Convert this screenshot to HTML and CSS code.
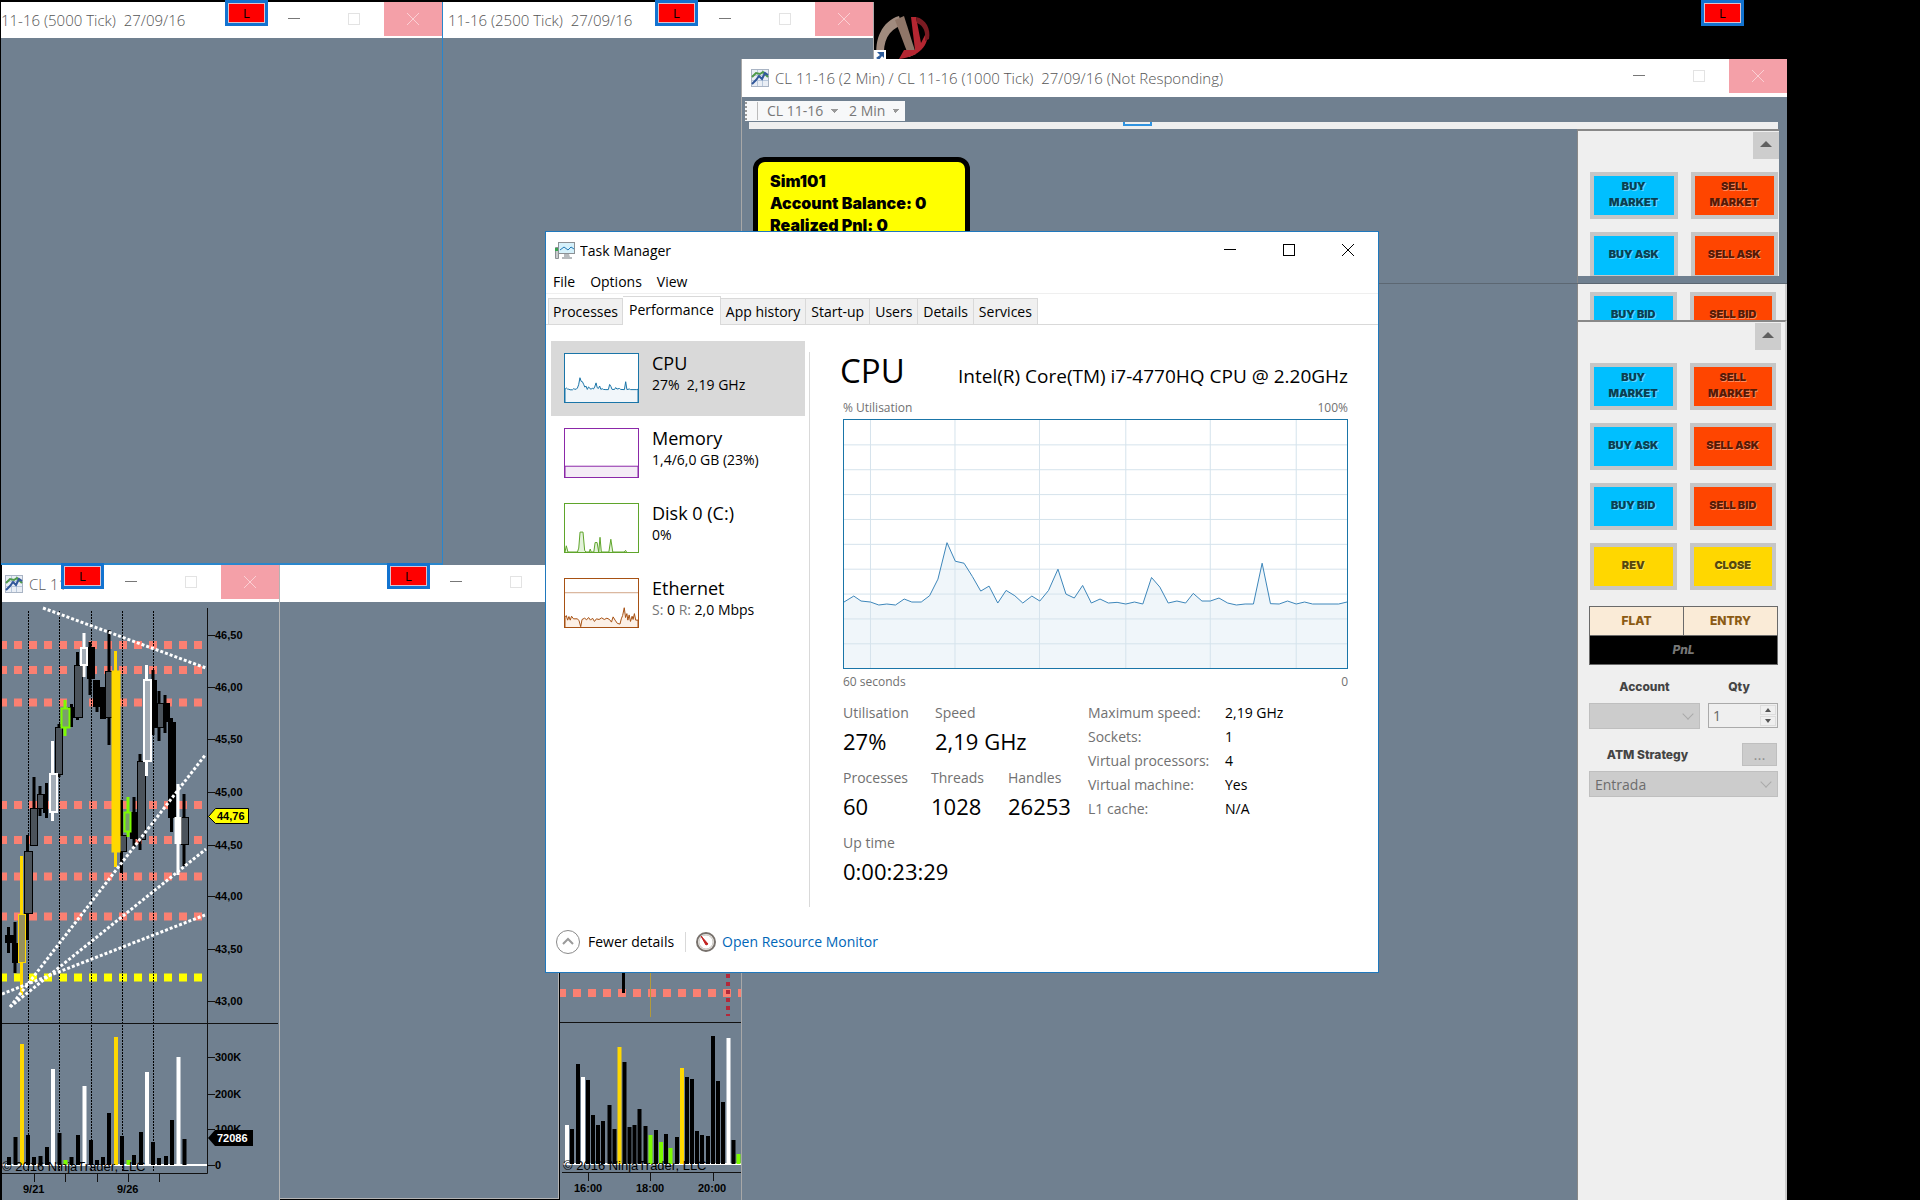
FILE: index.html
```html
<!DOCTYPE html>
<html lang="en">
<head>
    <meta charset="UTF-8">
    <meta name="viewport" content="width=device-width, initial-scale=1.0">
    <title>Task Manager</title>
    <link rel="stylesheet" href="styles.css">
</head>
<body>

    <!-- Shared icons -->
    <svg class="defs" aria-hidden="true">
        <symbol id="icon-min" viewBox="0 0 14 14"><path d="M1 6.5h12" fill="none" stroke="currentColor"/></symbol>
        <symbol id="icon-max" viewBox="0 0 14 14"><rect x="1.5" y="1.5" width="11" height="11" fill="none" stroke="currentColor"/></symbol>
        <symbol id="icon-close" viewBox="0 0 14 14"><path d="M1 1l12 12M13 1L1 13" fill="none" stroke="currentColor"/></symbol>
        <symbol id="icon-chart" viewBox="0 0 18 18">
            <rect x=".5" y=".5" width="17" height="17" fill="#e9eef5" stroke="#a9b4c4"/>
            <path d="M6.5 1v16M11.5 1v16M1 6.5h16M1 11.5h16" stroke="#b8c8dc"/>
            <path d="M1 8l4-4 4 1 3-2 5 5" fill="none" stroke="#4f9a4a" stroke-width="2"/>
            <path d="M1 15l4-4 3-4 3 3 3-6 3 2" fill="none" stroke="#31589b" stroke-width="2"/>
        </symbol>
    </svg>

    <main class="desktop">

        <!-- Desktop shortcut -->
        <svg class="shortcut" viewBox="0 0 58 46" aria-label="NinjaTrader">
            <path d="M4 44C1 26 9 7 26 2l3 9C15 16 10 27 11 44z" fill="#a08b7e"/>
            <path d="M22 6l9-4 12 38-7 3z" fill="#8f7668"/>
            <path d="M38 3h5l5 26 6-12c3 14-8 26-28 28l5-9 11 0z" fill="#b52631"/>
            <path d="M43 3c10 2 15 12 13 22l-4 2c1-9-1-15-8-18z" fill="#7b1b22"/>
            <path d="M0 36h13v10H0z" fill="#fff"/>
            <path d="M4 38h7v6l-2-2-3 4-3-2 4-3z" fill="#2b5b9b"/>
        </svg>

        <!-- Tick chart windows -->
        <section class="window win-5000">
            <header class="titlebar">
                <h2 class="title">11-16 (5000 Tick)&nbsp; 27/09/16</h2>
                <button class="win-btn min" aria-label="Minimise"><svg><use href="#icon-min"/></svg></button>
                <button class="win-btn" aria-label="Maximise"><svg><use href="#icon-max"/></svg></button>
                <button class="win-btn close" aria-label="Close"><svg><use href="#icon-close"/></svg></button>
            </header>
        </section>
        <section class="window win-2500">
            <header class="titlebar">
                <h2 class="title">11-16 (2500 Tick)&nbsp; 27/09/16</h2>
                <button class="win-btn min" aria-label="Minimise"><svg><use href="#icon-min"/></svg></button>
                <button class="win-btn" aria-label="Maximise"><svg><use href="#icon-max"/></svg></button>
                <button class="win-btn close" aria-label="Close"><svg><use href="#icon-close"/></svg></button>
            </header>
        </section>

        <!-- Daily chart window -->
        <section class="window win-daily">
            <header class="titlebar">
                <svg class="app-icon"><use href="#icon-chart"/></svg>
                <h2 class="title">CL 11</h2>
                <button class="win-btn min" aria-label="Minimise"><svg><use href="#icon-min"/></svg></button>
                <button class="win-btn" aria-label="Maximise"><svg><use href="#icon-max"/></svg></button>
                <button class="win-btn close" aria-label="Close"><svg><use href="#icon-close"/></svg></button>
            </header>
            <svg class="chart" viewBox="2 602 277 598" preserveAspectRatio="xMinYMin slice">
                <!-- support / resistance -->
                <path class="level" d="M-1 645H204M-1 670H204M-1 702.5H204M-1 805H204M-1 840H204M-1 876.5H204M-1 916.5H204"/>
                <path class="level yellow" d="M-1 977.5H204"/>
                <path class="session" d="M28.5 611V1171M59.5 611V1171M91.5 611V1171M122.5 611V1171M153.5 611V1171"/>
                <!-- candles -->
                <g class="candle solid">
                    <path d="M8.5 927V953M15 922V973M46.5 783V818M71.5 704V727M90 642V695M97 680V712M109 630V745M134 797V847M153 670V735M165 695V733M171.5 718V832"/>
                    <path d="M27.5 835V940M34 777V845M40 786V816M59 724V777M77.5 652V720M121.5 800V873M140 754V850M159 691V741M184 794V866"/>
                    <rect x="5" y="935" width="9" height="8"/><rect x="12" y="943" width="6" height="20"/>
                    <rect x="43" y="794" width="5" height="19"/><rect x="68" y="707" width="8" height="11"/>
                    <rect x="87" y="647" width="8" height="32"/><rect x="93" y="680" width="7" height="27"/>
                    <rect x="100" y="687" width="6" height="32"/><rect x="130" y="812" width="9" height="27"/>
                    <rect x="149" y="680" width="8" height="48"/><rect x="162" y="703" width="8" height="19"/>
                    <rect x="168" y="722" width="8" height="96"/>
                </g>
                <g class="candle hollow">
                    <rect x="24.5" y="851.5" width="8" height="62"/><rect x="30.5" y="808.5" width="7" height="37"/>
                    <rect x="37.5" y="794.5" width="6" height="14"/><rect x="55.5" y="727.5" width="7" height="47"/>
                    <rect x="74.5" y="665.5" width="8" height="52"/><rect x="105.5" y="671.5" width="7" height="46"/>
                    <rect x="118.5" y="835.5" width="8" height="16"/><rect x="137.5" y="761.5" width="8" height="78"/>
                    <rect x="157.5" y="703.5" width="6" height="24"/><rect x="181.5" y="817.5" width="7" height="27"/>
                </g>
                <g class="candle white">
                    <path d="M52.5 741V774M52.5 812V821M84 633V648M84 665V677M146.5 665V680M146.5 761V776M178 784V875"/>
                    <rect x="50" y="774" width="7" height="38"/><rect x="81" y="648" width="6" height="17"/>
                    <rect x="144" y="680" width="7" height="81"/><rect x="175.5" y="818" width="5" height="25" fill="#fff"/>
                </g>
                <g class="candle green">
                    <path d="M65 700V708M65 728V736M128 797V812M128 832V837"/>
                    <rect x="61.5" y="708.5" width="8" height="19"/><rect x="124.5" y="812.5" width="6" height="19"/>
                </g>
                <g class="candle gold">
                    <path d="M21.5 856V995M115.5 651V867"/>
                    <rect x="18.5" y="914.5" width="7" height="48" fill="#96905c"/><rect x="112" y="671" width="8" height="181" fill="#ffd800"/>
                </g>
                <!-- trend lines -->
                <path class="trend" d="M43 608L206 668M10 1007L206 754M10 1007L206 849M2 994L205 915"/>
                <!-- volume -->
                <path class="axis" d="M2 1023.5H278"/>
                <path class="baseline" d="M2 1165H207"/>
                <path class="bars" d="M9 1165V1157M15.5 1165V1137M28 1165V1135M34 1165V1157M40.5 1165V1156M47 1165V1147M59.5 1165V1133M71.5 1165V1157M78 1165V1135M91 1165V1140M97 1165V1160M103 1165V1157M109 1165V1113M122 1165V1136M134 1165V1155M141 1165V1132M153 1165V1142M159 1165V1158M166 1165V1156M172 1165V1120M184.5 1165V1139"/>
                <path class="bars gold" d="M22 1165V1044M116 1165V1037"/>
                <path class="bars white" d="M53 1165V1069M84.5 1165V1086M147 1165V1072M178.5 1165V1057"/>
                <path class="bars green" d="M65.5 1165V1160M128.5 1165V1160"/>
                <text class="watermark" x="2" y="1171">© 2016 NinjaTrader, LLC</text>
                <!-- axes -->
                <path class="axis" d="M207.5 608V1173.5H2M207 635.5h8M207 687.5h8M207 739.5h8M207 792.5h8M207 845.5h8M207 896.5h8M207 949.5h8M207 1001.5h8M207 1057.5h8M207 1094.5h8M207 1129.5h8M207 1165.5h8M34.5 1174v8M65.5 1174v8M97.5 1174v8M128.5 1174v8M159.5 1174v8"/>
                <g class="tick-label">
                    <text x="215" y="639">46,50</text><text x="215" y="691">46,00</text>
                    <text x="215" y="743">45,50</text><text x="215" y="796">45,00</text>
                    <text x="215" y="849">44,50</text><text x="215" y="900">44,00</text>
                    <text x="215" y="953">43,50</text><text x="215" y="1005">43,00</text>
                    <text x="215" y="1061">300K</text><text x="215" y="1098">200K</text>
                    <text x="215" y="1133">100K</text><text x="215" y="1169">0</text>
                    <text x="23" y="1193">9/21</text><text x="117" y="1193">9/26</text>
                </g>
                <path d="M208.5 816.5l7-8h33v15h-33z" fill="#ff0" stroke="#000"/>
                <path d="M208 1138l7-8h38v16h-38z"/>
                <g class="tick-label">
                    <text x="217" y="820">44,76</text><text x="217" y="1142" fill="#fff">72086</text>
                </g>
            </svg>
        </section>

        <!-- Empty chart window -->
        <section class="window win-empty">
            <header class="titlebar">
                <h2 class="title"></h2>
                <button class="win-btn min" aria-label="Minimise"><svg><use href="#icon-min"/></svg></button>
                <button class="win-btn" aria-label="Maximise"><svg><use href="#icon-max"/></svg></button>
            </header>
        </section>

        <!-- Intraday chart window -->
        <section class="window win-intraday">
            <svg class="chart" viewBox="560 970 181 230" preserveAspectRatio="xMinYMin slice">
                <path class="level" d="M558 993H741"/>
                <path d="M623.5 970V993" stroke="#000" stroke-width="3"/>
                <path d="M650.5 970V1017" stroke="#b39a3a"/>
                <path d="M728 974V1016" stroke="#b3283a" stroke-width="4" stroke-dasharray="4 4"/>
                <path class="axis" d="M560 1022.5H741"/>
                <path class="baseline" d="M563 1164H741"/>
                <path class="bars" d="M572 1164V1129M578 1164V1064M588 1164V1080M593 1164V1115M598 1164V1125M603 1164V1121M609.5 1164V1105M614.5 1164V1129M624.5 1164V1062M629.5 1164V1127M634.5 1164V1125M639.5 1164V1109M645.5 1164V1126M656 1164V1130M666 1164V1134M677 1164V1137M687 1164V1077M692 1164V1079M697 1164V1131M702 1164V1135M708 1164V1136M713 1164V1036M718 1164V1081M723 1164V1102M733.5 1164V1140"/>
                <path class="bars gold" d="M619.5 1164V1047M682 1164V1068"/>
                <path class="bars white" d="M567 1164V1125M583 1164V1077M728.5 1164V1038"/>
                <path class="bars green" d="M650.5 1164V1135M661 1164V1142M670.5 1164V1148M738.5 1164V1154"/>
                <text class="watermark" x="563" y="1170">© 2016 NinjaTrader, LLC</text>
                <path class="axis" d="M562 1172.5H741M588.5 1173v8M650.5 1173v8M713.5 1173v8"/>
                <g class="tick-label">
                    <text x="574" y="1192">16:00</text><text x="636" y="1192">18:00</text><text x="698" y="1192">20:00</text>
                </g>
            </svg>
        </section>

        <!-- Main trading window -->
        <section class="window win-main">
            <header class="titlebar">
                <svg class="app-icon"><use href="#icon-chart"/></svg>
                <h2 class="title">CL 11-16 (2 Min) / CL 11-16 (1000 Tick)&nbsp; 27/09/16 (Not Responding)</h2>
                <button class="win-btn min" aria-label="Minimise"><svg><use href="#icon-min"/></svg></button>
                <button class="win-btn" aria-label="Maximise"><svg><use href="#icon-max"/></svg></button>
                <button class="win-btn close" aria-label="Close"><svg><use href="#icon-close"/></svg></button>
            </header>
            <div class="toolbar">
                <span class="grip"></span>
                <select class="tool-select" aria-label="Instrument"><option>CL 11-16</option></select>
                <select class="tool-select" aria-label="Interval"><option>2 Min</option></select>
            </div>
            <div class="strip"><span class="strip-mark"></span></div>
            <div class="pane pane-top">
                <div class="pane-chart">
                    <div class="account-box">
                        <p>Sim101</p>
                        <p>Account Balance: 0</p>
                        <p>Realized Pnl: 0</p>
                    </div>
                </div>
                <div class="trader">
                    <button class="scroll-up" aria-label="Scroll up"></button>
                    <div class="orders">
                        <button class="order buy">BUY MARKET</button>
                        <button class="order sell">SELL MARKET</button>
                        <button class="order buy">BUY ASK</button>
                        <button class="order sell">SELL ASK</button>
                    </div>
                </div>
            </div>
            <div class="pane pane-mid">
                <div class="pane-chart"></div>
                <div class="trader">
                    <div class="orders">
                        <button class="order buy">BUY BID</button>
                        <button class="order sell">SELL BID</button>
                    </div>
                </div>
            </div>
            <div class="pane pane-bottom">
                <div class="pane-chart"></div>
                <div class="trader">
                    <button class="scroll-up" aria-label="Scroll up"></button>
                    <div class="orders">
                        <button class="order buy">BUY MARKET</button>
                        <button class="order sell">SELL MARKET</button>
                        <button class="order buy">BUY ASK</button>
                        <button class="order sell">SELL ASK</button>
                        <button class="order buy">BUY BID</button>
                        <button class="order sell">SELL BID</button>
                        <button class="order flat">REV</button>
                        <button class="order flat">CLOSE</button>
                    </div>
                    <div class="position">
                        <span>FLAT</span>
                        <span>ENTRY</span>
                        <span class="pnl">PnL</span>
                    </div>
                    <div class="fields">
                        <div class="field">
                            <label for="account">Account</label>
                            <span class="drop"><select id="account" disabled><option></option></select></span>
                        </div>
                        <div class="field qty">
                            <label for="qty">Qty</label>
                            <span class="spinner">
                                <input type="text" id="qty" value="1">
                                <span class="steps">
                                    <button class="up" aria-label="More"></button>
                                    <button class="down" aria-label="Less"></button>
                                </span>
                            </span>
                        </div>
                    </div>
                    <div class="strategy">
                        <div class="strategy-head">
                            <label for="strategy">ATM Strategy</label>
                            <button class="more">...</button>
                        </div>
                        <span class="drop"><select id="strategy" disabled><option>Entrada</option></select></span>
                    </div>
                </div>
            </div>
        </section>

        <!-- Link buttons -->
        <button class="link-btn link-a">L</button>
        <button class="link-btn link-b">L</button>
        <button class="link-btn link-c">L</button>
        <button class="link-btn link-d">L</button>
        <button class="link-btn link-e">L</button>

        <!-- Task Manager -->
        <section class="task-manager">
            <header class="titlebar">
                <svg class="app-icon" viewBox="0 0 20 18">
                    <path d="M.5 5.5h3v11h-3z" fill="#c9ccce" stroke="#8c9195"/>
                    <path d="M0 6h3v3H0z" fill="#3aa352"/>
                    <rect x="3.5" y=".5" width="16" height="11" fill="#d5f1fb" stroke="#8c9195"/>
                    <path d="M5 8l4-3 4 3 3-3 3 2" fill="none" stroke="#2278b5"/>
                    <path d="M9 12h5l1 3h2v2H7v-2h2z" fill="#b6babd"/>
                </svg>
                <h1 class="title">Task Manager</h1>
                <button class="win-btn" aria-label="Minimise"><svg><use href="#icon-min"/></svg></button>
                <button class="win-btn" aria-label="Maximise"><svg><use href="#icon-max"/></svg></button>
                <button class="win-btn" aria-label="Close"><svg><use href="#icon-close"/></svg></button>
            </header>
            <nav class="menu">
                <button>File</button>
                <button>Options</button>
                <button>View</button>
            </nav>
            <div class="tabs">
                <button class="tab">Processes</button>
                <button class="tab active">Performance</button>
                <button class="tab">App history</button>
                <button class="tab">Start-up</button>
                <button class="tab">Users</button>
                <button class="tab">Details</button>
                <button class="tab">Services</button>
            </div>
            <div class="tm-body">
                <div class="sidebar">
                    <button class="item selected">
                        <svg class="thumb cpu" viewBox="64 208 1387 748" preserveAspectRatio="none">
                            <path class="line" d="M64 956V757L91 739L111 754L137 757L160 766L206 766L230 748L251 757L277 757L300 738L323 688L348 578L371 634L395 640L418 680L441 724L464 709L488 760L511 722L535 738L557 760L582 739L604 754L628 722L654 658L676 733L699 745L722 707L746 760L770 748L793 760L841 763L888 763L912 683L935 712L958 760L1006 760L1027 731L1051 754L1098 745L1122 760L1193 763L1217 640L1240 762L1287 754L1311 763L1428 763L1451 757V956"/>
                        </svg>
                        <span class="item-text"><span class="name">CPU</span><span class="value">27%&nbsp; 2,19 GHz</span></span>
                    </button>
                    <button class="item">
                        <svg class="thumb memory" viewBox="0 0 223 147" preserveAspectRatio="none">
                            <path class="line" d="M0 147V114H223V147"/>
                        </svg>
                        <span class="item-text"><span class="name">Memory</span><span class="value">1,4/6,0 GB (23%)</span></span>
                    </button>
                    <button class="item">
                        <svg class="thumb disk" viewBox="0 0 223 147" preserveAspectRatio="none">
                            <path class="line" d="M0 147L4 128L9 147H38L42 135L46 86H55L60 142L64 147H74L77 138L80 147H88L92 118L98 118L103 147L107 102L111 147H134L140 108L146 147H181L185 142L188 147"/>
                        </svg>
                        <span class="item-text"><span class="name">Disk 0 (C:)</span><span class="value">0%</span></span>
                    </button>
                    <button class="item">
                        <svg class="thumb ethernet" viewBox="0 0 223 147" preserveAspectRatio="none">
                            <path class="guide" d="M0 42H223"/>
                            <path class="line" d="M0 147V118L4 112L8 126L12 115L16 126L20 114L26 122L38 122L43 128L48 146L52 124L60 120L66 125L72 118L78 126L84 120L90 130L96 122L104 124L112 119L120 124L128 120L136 124L142 132L147 116L153 126L160 136L168 138L172 122L176 112L181 88L185 118L189 106L192 126L196 110L200 130L205 114L208 124L212 106L216 126H223V147"/>
                        </svg>
                        <span class="item-text"><span class="name">Ethernet</span><span class="value"><i>S:</i> 0 <i>R:</i> 2,0 Mbps</span></span>
                    </button>
                </div>
                <div class="details">
                    <div class="heading">
                        <h2>CPU</h2>
                        <span>Intel(R) Core(TM) i7-4770HQ CPU @ 2.20GHz</span>
                    </div>
                    <div class="caption"><span>% Utilisation</span><span>100%</span></div>
                    <svg class="graph" viewBox="64 208 1387 748" preserveAspectRatio="none">
                        <path class="area" d="M64 956V757L91 739L111 754L137 757L160 766L182 763L206 766L230 748L251 757L277 757L300 738L323 688L348 578L371 634L395 640L418 680L441 724L464 709L488 760L511 722L535 738L557 760L582 739L604 754L628 722L654 658L676 733L699 745L722 707L746 760L770 748L793 760L817 758L841 763L865 757L888 763L912 683L935 712L958 760L982 754L1006 760L1027 731L1051 754L1074 754L1098 745L1122 760L1146 766L1170 763L1193 763L1217 640L1240 762L1264 763L1287 754L1311 763L1334 757L1356 763L1428 763L1451 757V956"/>
                        <path class="grid" d="M64 283H1451M64 358H1451M64 433H1451M64 508H1451M64 583H1451M64 658H1451M64 733H1451M64 808H1451M64 883H1451M137 208V956M370 208V956M603 208V956M841 208V956M1074 208V956M1311 208V956"/>
                        <path class="line" d="M64 757L91 739L111 754L137 757L160 766L182 763L206 766L230 748L251 757L277 757L300 738L323 688L348 578L371 634L395 640L418 680L441 724L464 709L488 760L511 722L535 738L557 760L582 739L604 754L628 722L654 658L676 733L699 745L722 707L746 760L770 748L793 760L817 758L841 763L865 757L888 763L912 683L935 712L958 760L982 754L1006 760L1027 731L1051 754L1074 754L1098 745L1122 760L1146 766L1170 763L1193 763L1217 640L1240 762L1264 763L1287 754L1311 763L1334 757L1356 763L1428 763L1451 757"/>
                    </svg>
                    <div class="caption bottom"><span>60 seconds</span><span>0</span></div>
                    <div class="stats">
                        <div class="stat-rows">
                            <dl class="stat-row speed">
                                <div><dt>Utilisation</dt><dd>27%</dd></div>
                                <div><dt>Speed</dt><dd>2,19 GHz</dd></div>
                            </dl>
                            <dl class="stat-row counts">
                                <div><dt>Processes</dt><dd>60</dd></div>
                                <div><dt>Threads</dt><dd>1028</dd></div>
                                <div><dt>Handles</dt><dd>26253</dd></div>
                            </dl>
                            <dl class="stat-row">
                                <div><dt>Up time</dt><dd>0:00:23:29</dd></div>
                            </dl>
                        </div>
                        <table class="specs">
                            <tr><th>Maximum speed:</th><td>2,19 GHz</td></tr>
                            <tr><th>Sockets:</th><td>1</td></tr>
                            <tr><th>Virtual processors:</th><td>4</td></tr>
                            <tr><th>Virtual machine:</th><td>Yes</td></tr>
                            <tr><th>L1 cache:</th><td>N/A</td></tr>
                        </table>
                    </div>
                </div>
            </div>
            <footer class="tm-footer">
                <button class="fewer">
                    <svg viewBox="0 0 24 24"><circle cx="12" cy="12" r="11.5" fill="#fff" stroke="#8a8a8a"/><path d="M7 14l5-5 5 5" fill="none" stroke="#9a9a9a" stroke-width="2"/></svg>
                    Fewer details
                </button>
                <a class="monitor" href="#">
                    <svg viewBox="0 0 20 20"><circle cx="10" cy="10" r="9" fill="#f3f1ee" stroke="#77716c" stroke-width="2"/><circle cx="10" cy="10" r="7" fill="#fff" stroke="#c8c4bf"/><path d="M5 4l7 8-2 1z" fill="#c3201f" stroke="#c3201f"/></svg>
                    Open Resource Monitor
                </a>
            </footer>
        </section>
    </main>

</body>
</html>
```
FILE: styles.css
```css
* {
    margin: 0;
    padding: 0;
    box-sizing: border-box;
}
body {
    background: #000;
    font-family: "Open Sans", "Noto Sans", sans-serif;
    font-size: 14px;
    color: #000;
}
button, input, select {
    font: inherit;
    color: inherit;
    border: none;
    background: none;
    border-radius: 0;
}
.defs {
    position: absolute;
    width: 0;
    height: 0;
}
.desktop {
    position: relative;
    height: 100vh;
    overflow: hidden;
}

/* Windows */
.window {
    position: absolute;
    display: flex;
    flex-direction: column;
    background: #708090;
    overflow: hidden;
}
.titlebar {
    display: flex;
    align-items: center;
    flex: none;
    height: 36px;
    background: #fff;
}
.title {
    flex: 1;
    font-size: 15px;
    font-weight: 300;
    line-height: 34px;
    white-space: nowrap;
    color: #555;
    overflow: hidden;
}
.app-icon {
    width: 18px;
    height: 18px;
    flex: none;
    margin: 0 6px 0 3px;
}
.win-btn {
    display: flex;
    align-items: center;
    justify-content: center;
    align-self: flex-start;
    width: 60px;
    height: 34px;
    flex: none;
    color: #e3e3e3;
}
.win-btn svg {
    width: 14px;
    height: 14px;
}
.win-btn.min {
    color: #777;
}
.win-btn.close {
    width: 58px;
    background: #f4a0a8;
    color: #fbd0d4;
}
.win-5000 {
    left: 1px;
    top: 2px;
    width: 442px;
    height: 563px;
    border-right: 1px solid #2a86cc;
    border-bottom: 2px solid #2a86cc;
}
.win-2500 {
    left: 443px;
    top: 2px;
    width: 431px;
    height: 565px;
    border-right: 1px solid #a8a8a8;
    border-bottom: 2px solid #8a8a8a;
}
.win-2500 .title {
    padding-left: 5px;
}
.win-daily {
    left: 2px;
    top: 565px;
    bottom: 0;
    width: 278px;
    border-right: 1px solid #b4b4b4;
}
.win-daily .titlebar, .win-empty .titlebar {
    height: 37px;
}
.win-empty {
    left: 280px;
    top: 565px;
    bottom: 1px;
    width: 279px;
    border-right: 1px solid #b4b4b4;
    border-bottom: 1px solid #b4b4b4;
}
.win-empty .titlebar {
    padding-right: 12px;
}
.win-intraday {
    left: 560px;
    top: 567px;
    bottom: 0;
    width: 181px;
    justify-content: flex-end;
}
.win-intraday .chart {
    flex: none;
    height: 230px;
}
.win-main {
    left: 741px;
    top: 59px;
    bottom: 0;
    width: 1046px;
    border-left: 1px solid #a8a8a8;
}
.win-main .titlebar {
    height: 38px;
    padding-left: 6px;
}

/* Charts */
.chart {
    width: 100%;
    flex: 1;
}
.level {
    stroke: #fa8072;
    stroke-width: 8;
    stroke-dasharray: 8 7;
}
.level.yellow {
    stroke: #ff0;
}
.session {
    stroke: #000;
    stroke-dasharray: 2 1;
    shape-rendering: crispEdges;
}
.candle path {
    stroke-width: 3;
}
.candle rect {
    stroke-width: 1;
}
.candle.solid path, .candle.hollow rect {
    stroke: #000;
}
.candle.hollow rect {
    fill: #4b535b;
}
.candle.white {
    stroke: #fff;
    fill: #a3acb6;
}
.candle.green {
    stroke: #7cfc00;
    fill: #79a06c;
}
.candle.gold {
    stroke: #ffd800;
}
.candle.white rect, .candle.green rect {
    stroke-width: 2;
}
.trend {
    fill: none;
    stroke: #fff;
    stroke-width: 3;
    stroke-dasharray: 3 2;
}
.axis {
    fill: none;
    stroke: #111;
}
.baseline {
    stroke: #fff;
    stroke-width: 2;
}
.bars {
    stroke: #000;
    stroke-width: 4;
}
.bars.gold {
    stroke: #ffd800;
}
.bars.white {
    stroke: #fff;
}
.bars.green {
    stroke: #7cfc00;
}
.watermark {
    font: 13px "Liberation Sans", sans-serif;
}
.tick-label {
    font: 900 11px "Liberation Sans", sans-serif;
}

/* Main window */
.toolbar {
    display: flex;
    align-items: center;
    align-self: flex-start;
    gap: 4px;
    flex: none;
    height: 20px;
    margin: 4px 0 0 3px;
    background: #f7f8f9;
    color: #777;
}
.grip {
    width: 13px;
    height: 18px;
    margin-right: 3px;
    border-left: 2px dotted #999;
    border-right: 1px solid #bbb;
}
.tool-select {
    appearance: none;
    height: 20px;
    padding: 0 19px 0 2px;
    background: linear-gradient(45deg, transparent 50%, #999 50%) right 9px center / 4px 4px no-repeat,
        linear-gradient(-45deg, transparent 50%, #999 50%) right 5px center / 4px 4px no-repeat;
    line-height: 20px;
}
.strip {
    flex: none;
    height: 7px;
    margin: 1px 9px 0 7px;
    background: #efefef;
}
.strip-mark {
    display: block;
    width: 29px;
    height: 4px;
    margin-left: 374px;
    border: 2px solid #2f93e0;
    border-top: none;
}
.pane {
    display: flex;
    flex: none;
    overflow: hidden;
}
.pane-chart {
    flex: 1;
    border-right: 1px solid #888;
}
.pane-top {
    height: 155px;
    border-bottom: 1px solid #5c6772;
}
.pane-mid {
    height: 36px;
}
.pane-bottom {
    flex: 1;
}
.account-box {
    width: 217px;
    margin: 28px 0 0 11px;
    padding: 8px 12px;
    border: 5px solid #000;
    border-radius: 12px;
    background: #ff0;
    font: 900 16px/22px Inter, sans-serif;
}
.trader {
    width: 209px;
    padding: 0 9px 0 12px;
    border-top: 2px solid #888;
    border-right: 2px solid #ccc;
    background: #efefef;
    overflow: hidden;
    font-family: Inter, sans-serif;
}
.pane-top .trader {
    width: 201px;
    padding-right: 1px;
    border-right: none;
    margin: 0 8px 7px 0;
}
.pane-mid .trader {
    padding-top: 8px;
    border-top: none;
}
.scroll-up {
    display: block;
    width: 26px;
    height: 27px;
    margin: 1px -1px 13px auto;
    background: #cdcdcd;
}
.pane-bottom .scroll-up {
    margin-right: -5px;
}
.scroll-up::before {
    content: "";
    display: block;
    width: 0;
    margin: 0 auto 3px;
    border: 6px solid transparent;
    border-top: none;
    border-bottom-color: #606060;
}
.orders {
    display: grid;
    grid-template-columns: 1fr 1fr;
    grid-auto-rows: 47px;
    gap: 13px;
}
.order {
    padding: 0 11px 3px;
    border: 4px solid #c6c6c6;
    font-size: 11px;
    font-weight: 900;
    line-height: 16px;
    text-shadow: 1px 1px 0 rgba(255, 255, 255, 0.4);
}
.buy {
    background: #00bfff;
    color: #0b3f52;
}
.sell {
    background: #ff4500;
    color: #571a05;
}
.flat {
    background: #ffd700;
    color: #57490a;
}
.position {
    display: grid;
    grid-template-columns: 1fr 1fr;
    gap: 1px;
    margin: 16px -2px 0 -1px;
    padding: 1px;
    background: #6a6a6a;
}
.position span {
    height: 28px;
    background: #faebd7;
    color: #8b5a14;
    font-size: 12px;
    font-weight: 800;
    line-height: 28px;
    text-align: center;
}
.position .pnl {
    grid-column: 1 / 3;
    background: #000;
    color: #777;
    font-style: italic;
}
.fields {
    display: flex;
    gap: 8px;
    margin: 12px -2px 0 -1px;
}
.field {
    flex: 1;
}
.field.qty {
    flex: none;
    width: 70px;
}
.field label, .strategy label {
    display: block;
    font-size: 12px;
    font-weight: 800;
    line-height: 20px;
    text-align: center;
    color: #444;
}
.qty label {
    padding-right: 8px;
}
.drop {
    display: block;
    position: relative;
}
.drop select {
    appearance: none;
    width: 100%;
    height: 26px;
    padding: 0 5px;
    border: 1px solid #bfbfbf;
    background: #ccc;
    color: #6d6d6d;
    font-family: "Open Sans", sans-serif;
    opacity: 1;
}
.drop::after {
    content: "";
    position: absolute;
    right: 8px;
    top: 7px;
    width: 7px;
    height: 7px;
    border: solid #aaa;
    border-width: 0 1px 1px 0;
    transform: rotate(45deg);
}
.field .drop, .spinner {
    margin-top: 6px;
}
.spinner {
    display: flex;
    height: 25px;
    padding: 1px;
    border: 1px solid #aaa;
}
.spinner input {
    flex: 1;
    width: 0;
    padding: 0 3px;
    color: #666;
    font-family: "Open Sans", sans-serif;
}
.steps {
    display: flex;
    flex-direction: column;
    gap: 1px;
    width: 16px;
}
.steps button {
    flex: 1;
    display: flex;
    align-items: center;
    justify-content: center;
    border: 1px solid #ddd;
}
.steps button::before {
    content: "";
    border: 3px solid transparent;
}
.steps .up::before {
    border-top: none;
    border-bottom: 4px solid #555;
}
.steps .down::before {
    border-bottom: none;
    border-top: 4px solid #555;
}
.strategy {
    margin: 14px -2px 0 -1px;
}
.strategy-head {
    display: flex;
    align-items: center;
    margin-bottom: 5px;
}
.strategy-head label {
    flex: 1;
    padding-right: 36px;
}
.strategy-head .more {
    width: 35px;
    height: 23px;
    margin-right: 1px;
    border: 1px solid #bfbfbf;
    background: #ccc;
    color: #888;
    line-height: 16px;
}

/* Link buttons */
.link-btn {
    position: absolute;
    width: 43px;
    height: 26px;
    border: 3px solid #1273d0;
    background: #f00;
    box-shadow: inset 0 0 0 1px #d9c2d0;
    font-size: 13px;
    line-height: 18px;
}
.link-a {
    left: 225px;
    top: 0;
}
.link-b {
    left: 655px;
    top: 0;
}
.link-c {
    left: 61px;
    top: 563px;
}
.link-d {
    left: 387px;
    top: 563px;
}
.link-e {
    left: 1701px;
    top: 0;
}
.shortcut {
    position: absolute;
    left: 873px;
    top: 14px;
    width: 58px;
    height: 46px;
}

/* Task Manager */
.task-manager {
    position: absolute;
    left: 545px;
    top: 231px;
    width: 834px;
    height: 742px;
    display: flex;
    flex-direction: column;
    border: 1px solid #1f78bd;
    background: #fff;
}
.task-manager .titlebar {
    height: 37px;
    padding: 0 1px 0 6px;
}
.task-manager .app-icon {
    width: 20px;
    margin-right: 5px;
}
.task-manager .title {
    font-size: 14px;
    font-weight: 400;
    color: #000;
}
.task-manager .win-btn {
    height: 36px;
    width: 59px;
    color: #000;
}
.menu {
    display: flex;
    gap: 15px;
    height: 25px;
    padding-left: 7px;
    border-bottom: 1px solid #efefef;
}
.tabs {
    display: flex;
    align-items: flex-end;
    height: 31px;
    padding-left: 2px;
    border-bottom: 1px solid #d9d9d9;
}
.tab {
    height: 26px;
    padding: 0 5px;
    border: 1px solid #d9d9d9;
    border-left-width: 0;
    border-bottom: none;
    background: #f0f0f0;
    white-space: nowrap;
}
.tab:first-child {
    padding: 0 4px;
    border-left-width: 1px;
}
.tab.active {
    height: 29px;
    margin-bottom: -1px;
    padding: 0 6px 4px;
    background: #fff;
}
.tm-body {
    display: flex;
    flex: 1;
}
.sidebar {
    width: 264px;
    padding: 16px 4px 0 5px;
}
.sidebar::after {
    content: "";
    position: absolute;
    left: 263px;
    top: 120px;
    width: 1px;
    height: 555px;
    background: #d9d9d9;
}
.item {
    display: flex;
    align-items: flex-start;
    width: 254px;
    height: 75px;
    padding: 12px 13px 0;
    text-align: left;
}
.item.selected {
    background: #d9d9d9;
}
.thumb {
    width: 75px;
    height: 50px;
    flex: none;
    border: 1px solid;
    background: #fff;
}
.thumb path, .graph path {
    vector-effect: non-scaling-stroke;
    stroke: currentColor;
    stroke-width: 1;
}
.thumb .guide {
    opacity: 0.5;
}
.cpu {
    color: #1a75a8;
    fill: #f1f6fa;
}
.memory {
    color: #8b28a8;
    fill: #f4ecf6;
}
.disk {
    color: #5fa52b;
    fill: #e3f2da;
}
.ethernet {
    color: #a75113;
    fill: #fcf0e6;
}
.item-text {
    display: flex;
    flex-direction: column;
    margin-left: 13px;
}
.name {
    font-size: 18px;
    line-height: 20px;
}
.value {
    line-height: 24px;
}
.value i {
    font-style: normal;
    color: #777;
}
.details {
    flex: 1;
    padding: 22px 30px 0 33px;
}
.heading {
    display: flex;
    align-items: baseline;
    justify-content: space-between;
    height: 50px;
    line-height: 48px;
    font-size: 19px;
}
.heading h2 {
    margin-left: -3px;
    font-size: 33px;
    font-weight: 400;
}
.caption {
    display: flex;
    justify-content: space-between;
    font-size: 12px;
    line-height: 22px;
    color: #717171;
}
.caption.bottom {
    padding-top: 2px;
}
.graph {
    display: block;
    width: 100%;
    height: 250px;
    border: 1px solid #1a75a8;
    color: #3d86ba;
    fill: none;
}
.graph .area {
    fill: #f0f6fa;
    stroke: none;
}
.graph .grid {
    stroke: #d5e3ec;
}
.stats {
    display: flex;
    margin-top: 8px;
}
.stat-rows {
    width: 245px;
}
.stat-row {
    display: flex;
    height: 65px;
}
.speed div:first-child {
    width: 92px;
}
.counts div:first-child {
    width: 88px;
}
.counts div:nth-child(2) {
    width: 77px;
}
dt {
    line-height: 24px;
    color: #717171;
}
dd {
    font-size: 22px;
    line-height: 32px;
}
.specs {
    align-self: flex-start;
    border-collapse: collapse;
}
.specs th {
    width: 137px;
    font-weight: 400;
    text-align: left;
    color: #717171;
    white-space: nowrap;
}
.specs td, .specs th {
    height: 24px;
    line-height: 24px;
}
.tm-footer {
    display: flex;
    align-items: center;
    height: 61px;
    flex: none;
    padding-left: 10px;
}
.fewer, .monitor {
    display: flex;
    align-items: center;
    gap: 8px;
}
.fewer {
    padding-right: 11px;
}
.fewer svg {
    width: 24px;
    height: 24px;
}
.monitor {
    gap: 6px;
    padding-left: 10px;
    border-left: 1px solid #d9d9d9;
    color: #0066b8;
    text-decoration: none;
}
.monitor svg {
    width: 20px;
    height: 20px;
}
```
